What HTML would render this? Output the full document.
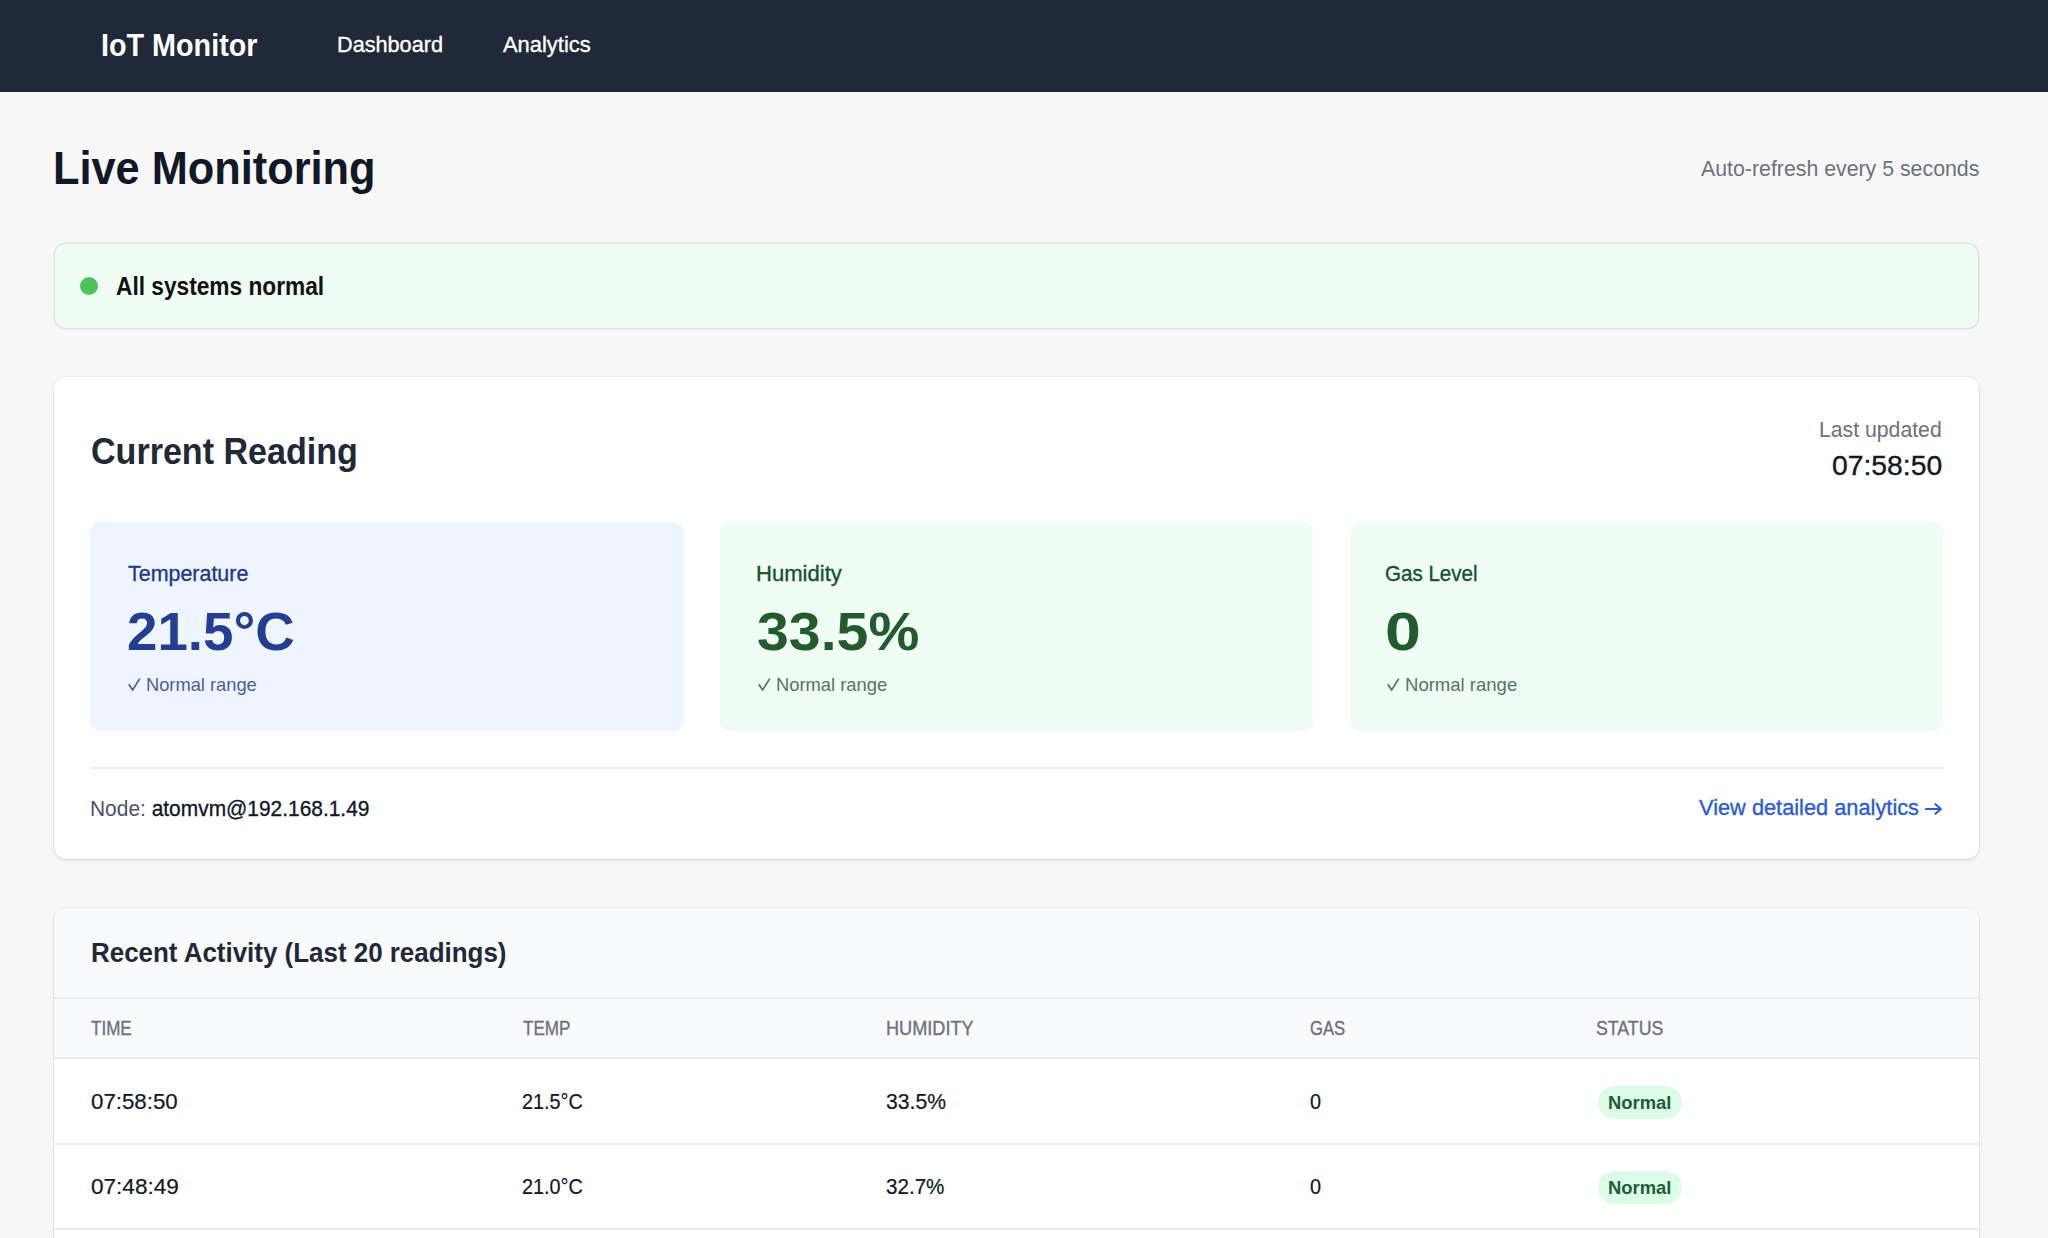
<!DOCTYPE html>
<html>
<head>
<meta charset="utf-8">
<style>
html,body{margin:0;padding:0;}
body{width:2048px;height:1238px;overflow:hidden;background:#f7f7f7;font-family:"Liberation Sans",sans-serif;position:relative;}
.t{position:absolute;white-space:nowrap;line-height:1;transform-origin:0 0;}
</style>
</head>
<body>
<div style="position:absolute;left:0;top:0;width:2048px;height:92px;background:#1f2937;"></div>
<div style="position:absolute;box-sizing:border-box;left:54px;top:243px;width:1925px;height:86px;background:#f0fdf4;border:1px solid #d2e8d7;border-radius:12px;box-shadow:0 0 0 0.6px rgba(200,225,205,.55);"></div>
<div style="position:absolute;left:79.5px;top:277px;width:18px;height:18px;border-radius:50%;background:#4cc15c;"></div>
<div style="position:absolute;left:54px;top:377px;width:1925px;height:482px;background:#fff;border-radius:12px;box-shadow:0 0 0 1px rgba(0,0,0,.035),0 1px 2px rgba(0,0,0,.10),0 2px 4px rgba(0,0,0,.04);"></div>
<div style="position:absolute;left:90px;top:522px;width:594px;height:209px;border-radius:10px;background:#eef5fe;"></div>
<div style="position:absolute;left:720px;top:522px;width:593px;height:209px;border-radius:10px;background:#f0fdf4;"></div>
<div style="position:absolute;left:1350px;top:522px;width:593px;height:209px;border-radius:10px;background:#f0fdf4;"></div>
<svg style="position:absolute;left:128px;top:678px;" width="13" height="13" viewBox="0 0 13 13"><path d="M0.8 6.2 L4.6 12 L11.8 0.6" fill="none" stroke="#4b5f9e" stroke-width="1.7"/></svg>
<svg style="position:absolute;left:757.8px;top:678px;" width="13" height="13" viewBox="0 0 13 13"><path d="M0.8 6.2 L4.6 12 L11.8 0.6" fill="none" stroke="#53795c" stroke-width="1.7"/></svg>
<svg style="position:absolute;left:1386.8px;top:678px;" width="13" height="13" viewBox="0 0 13 13"><path d="M0.8 6.2 L4.6 12 L11.8 0.6" fill="none" stroke="#53795c" stroke-width="1.7"/></svg>
<div style="position:absolute;left:90px;top:767px;width:1853px;height:2px;background:#e9eaec;"></div>
<svg style="position:absolute;left:1925px;top:803px;" width="18" height="12" viewBox="0 0 18 12"><path d="M1 6 H15.5 M10.5 1.2 L15.8 6 L10.5 10.8" fill="none" stroke="#2d5bd7" stroke-width="2.1" stroke-linecap="round" stroke-linejoin="round"/></svg>
<div style="position:absolute;left:54px;top:908px;width:1925px;height:400px;background:#fff;border-radius:12px;box-shadow:0 0 0 1px rgba(0,0,0,.035),0 1px 2px rgba(0,0,0,.10),0 2px 4px rgba(0,0,0,.04);overflow:hidden;">
 <div style="position:absolute;left:0;top:0;width:1925px;height:150px;background:#f9fafb;"></div>
 <div style="position:absolute;left:0;top:89px;width:1925px;height:2px;background:#e9eaec;"></div>
 <div style="position:absolute;left:0;top:149px;width:1925px;height:2px;background:#e9eaec;"></div>
 <div style="position:absolute;left:0;top:235px;width:1925px;height:2px;background:#e9eaec;"></div>
 <div style="position:absolute;left:0;top:320px;width:1925px;height:2px;background:#e9eaec;"></div>
</div>
<div style="position:absolute;left:1597.5px;top:1086px;width:84.5px;height:33px;border-radius:17px;background:#dcfce7;"></div>
<div style="position:absolute;left:1597.5px;top:1171px;width:84.5px;height:33px;border-radius:17px;background:#dcfce7;"></div>
<div class="t" id="logo" style="left:101.43px;top:29.11px;font-size:32px;color:#ffffff;font-weight:bold;transform:scaleX(0.8983);">IoT Monitor</div>
<div class="t" id="nav1" style="left:336.65px;top:34.21px;font-size:22.4px;color:#ffffff;transform:scaleX(0.9674);-webkit-text-stroke:0.35px currentColor;">Dashboard</div>
<div class="t" id="nav2" style="left:503.00px;top:34.21px;font-size:22.4px;color:#ffffff;transform:scaleX(0.9783);-webkit-text-stroke:0.35px currentColor;">Analytics</div>
<div class="t" id="h1" style="left:53.40px;top:144.60px;font-size:46px;color:#111827;font-weight:bold;transform:scaleX(0.9420);">Live Monitoring</div>
<div class="t" id="auto" style="left:1700.79px;top:157.60px;font-size:22.2px;color:#6b7280;transform:scaleX(0.9604);">Auto-refresh every 5 seconds</div>
<div class="t" id="allok" style="left:116.00px;top:273.90px;font-size:24.9px;color:#111111;font-weight:bold;transform:scaleX(0.9119);">All systems normal</div>
<div class="t" id="cur" style="left:91.10px;top:433.00px;font-size:37.8px;color:#1f2937;font-weight:bold;transform:scaleX(0.9010);">Current Reading</div>
<div class="t" id="lastup" style="left:1819.26px;top:418.60px;font-size:22.2px;color:#6b7280;transform:scaleX(0.9564);">Last updated</div>
<div class="t" id="time" style="left:1831.74px;top:452.50px;font-size:27px;color:#111827;transform:scaleX(1.0487);-webkit-text-stroke:0.35px currentColor;">07:58:50</div>
<div class="t" id="l1" style="left:128.00px;top:563.00px;font-size:21.8px;color:#1e3a8a;transform:scaleX(0.9836);-webkit-text-stroke:0.35px currentColor;">Temperature</div>
<div class="t" id="v1" style="left:127.18px;top:604.01px;font-size:54px;color:#233f94;font-weight:bold;transform:scaleX(1.0123);">21.5°C</div>
<div class="t" id="n1" style="left:146.05px;top:675.61px;font-size:18.6px;color:#4b5f9e;transform:scaleX(0.9834);">Normal range</div>
<div class="t" id="l2" style="left:755.79px;top:563.00px;font-size:21.8px;color:#14532d;transform:scaleX(1.0121);-webkit-text-stroke:0.35px currentColor;">Humidity</div>
<div class="t" id="v2" style="left:756.72px;top:604.01px;font-size:54px;color:#235a2e;font-weight:bold;transform:scaleX(1.0598);">33.5%</div>
<div class="t" id="n2" style="left:775.82px;top:675.61px;font-size:18.6px;color:#53795c;transform:scaleX(0.9872);">Normal range</div>
<div class="t" id="l3" style="left:1385.02px;top:563.00px;font-size:21.8px;color:#14532d;transform:scaleX(0.9435);-webkit-text-stroke:0.35px currentColor;">Gas Level</div>
<div class="t" id="v3" style="left:1385.37px;top:604.01px;font-size:54px;color:#235a2e;font-weight:bold;transform:scaleX(1.1945);">0</div>
<div class="t" id="n3" style="left:1404.81px;top:675.61px;font-size:18.6px;color:#53795c;transform:scaleX(0.9962);">Normal range</div>
<div class="t" id="node" style="left:90.29px;top:797.81px;font-size:22.4px;color:#4b5563;transform:scaleX(0.9344);">Node: <span style="color:#111827;-webkit-text-stroke:0.35px #111827">atomvm@192.168.1.49</span></div>
<div class="t" id="link" style="left:1699.20px;top:797.32px;font-size:22px;color:#2d5bd7;transform:scaleX(0.9903);-webkit-text-stroke:0.35px currentColor;">View detailed analytics</div>
<div class="t" id="rec" style="left:90.87px;top:939.20px;font-size:27.5px;color:#1f2937;font-weight:bold;transform:scaleX(0.9429);">Recent Activity (Last 20 readings)</div>
<div class="t" id="th1" style="left:91.43px;top:1019.00px;font-size:19.6px;color:#6b7280;transform:scaleX(0.8705);-webkit-text-stroke:0.35px currentColor;">TIME</div>
<div class="t" id="th2" style="left:523.00px;top:1019.00px;font-size:19.6px;color:#6b7280;transform:scaleX(0.8704);-webkit-text-stroke:0.35px currentColor;">TEMP</div>
<div class="t" id="th3" style="left:886.07px;top:1019.00px;font-size:19.6px;color:#6b7280;transform:scaleX(0.9257);-webkit-text-stroke:0.35px currentColor;">HUMIDITY</div>
<div class="t" id="th4" style="left:1310.12px;top:1019.00px;font-size:19.6px;color:#6b7280;transform:scaleX(0.8507);-webkit-text-stroke:0.35px currentColor;">GAS</div>
<div class="t" id="th5" style="left:1596.10px;top:1019.00px;font-size:19.6px;color:#6b7280;transform:scaleX(0.9045);-webkit-text-stroke:0.35px currentColor;">STATUS</div>
<div class="t" id="r1a" style="left:91.38px;top:1092.00px;font-size:21.5px;color:#111827;transform:scaleX(1.0364);-webkit-text-stroke:0.2px currentColor;">07:58:50</div>
<div class="t" id="r1b" style="left:522.08px;top:1092.00px;font-size:21.5px;color:#111827;transform:scaleX(0.9222);-webkit-text-stroke:0.2px currentColor;">21.5°C</div>
<div class="t" id="r1c" style="left:886.41px;top:1092.00px;font-size:21.5px;color:#111827;transform:scaleX(0.9834);-webkit-text-stroke:0.2px currentColor;">33.5%</div>
<div class="t" id="r1d" style="left:1310.05px;top:1092.00px;font-size:21.5px;color:#111827;transform:scaleX(0.9242);-webkit-text-stroke:0.2px currentColor;">0</div>
<div class="t" id="b1" style="left:1607.80px;top:1094.41px;font-size:18.5px;color:#1e5e33;font-weight:bold;transform:scaleX(0.9952);">Normal</div>
<div class="t" id="r2a" style="left:91.37px;top:1177.00px;font-size:21.5px;color:#111827;transform:scaleX(1.0493);-webkit-text-stroke:0.2px currentColor;">07:48:49</div>
<div class="t" id="r2b" style="left:522.08px;top:1177.00px;font-size:21.5px;color:#111827;transform:scaleX(0.9222);-webkit-text-stroke:0.2px currentColor;">21.0°C</div>
<div class="t" id="r2c" style="left:886.45px;top:1177.00px;font-size:21.5px;color:#111827;transform:scaleX(0.9583);-webkit-text-stroke:0.2px currentColor;">32.7%</div>
<div class="t" id="r2d" style="left:1310.05px;top:1177.00px;font-size:21.5px;color:#111827;transform:scaleX(0.9242);-webkit-text-stroke:0.2px currentColor;">0</div>
<div class="t" id="b2" style="left:1607.80px;top:1179.41px;font-size:18.5px;color:#1e5e33;font-weight:bold;transform:scaleX(0.9952);">Normal</div>
</body>
</html>
